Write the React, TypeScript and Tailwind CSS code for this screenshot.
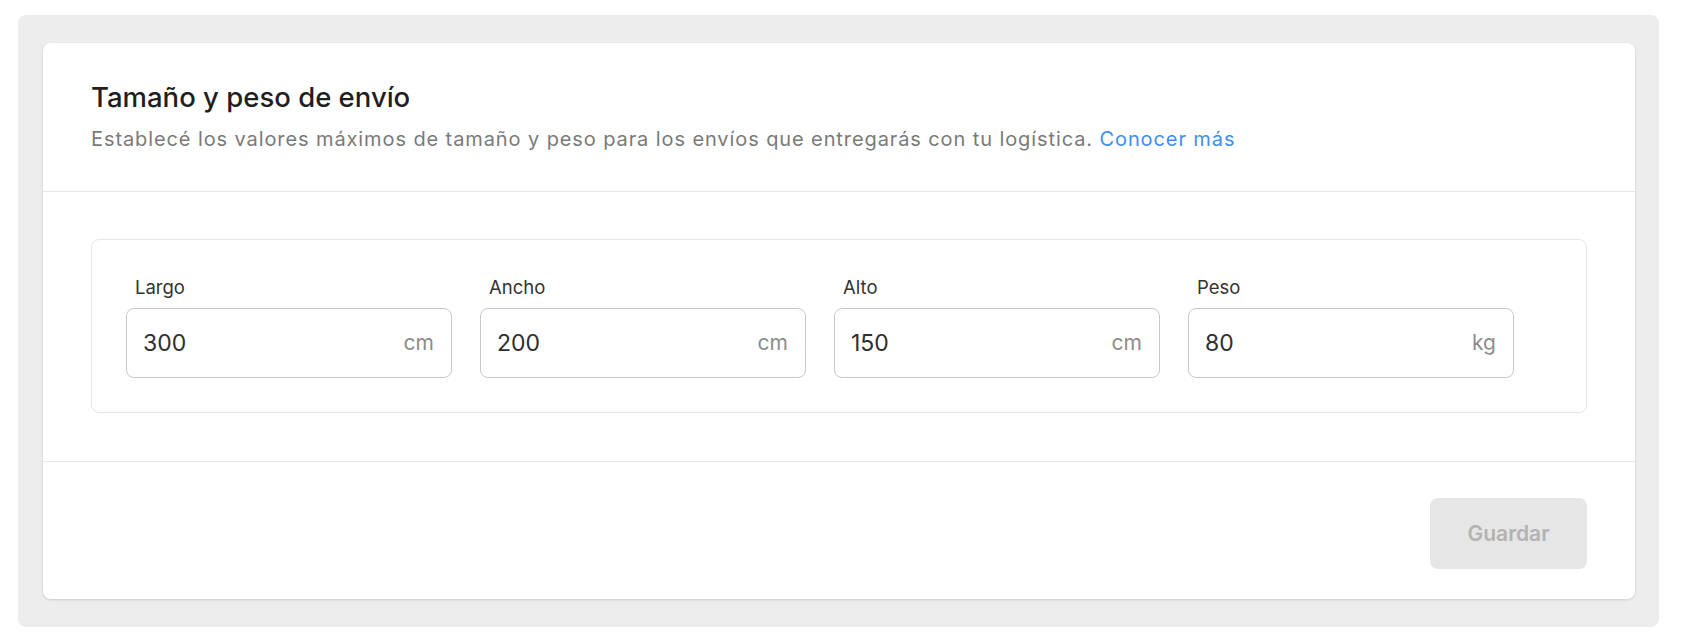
const fields = [
  { label: 'Largo', value: '300', unit: 'cm' },
  { label: 'Ancho', value: '200', unit: 'cm' },
  { label: 'Alto', value: '150', unit: 'cm' },
  { label: 'Peso', value: '80', unit: 'kg' },
];

function MeasureField({ label, value, unit }: { label: string; value: string; unit: string }) {
  return (
    <div className="w-[326px] flex flex-col">
      <label className="pl-[9px] mb-[10px] text-[18.5px] leading-[22px] text-[#333333]">{label}</label>
      <div className="h-[70px] flex items-center justify-between rounded-[8px] border border-[#c9c9c9] bg-white pl-[16px] pr-[17px]">
        <input
          type="text"
          defaultValue={value}
          className="w-[200px] bg-transparent text-[23px] text-[#2e2e2e] outline-none"
        />
        <span className="text-[21px] text-[#8c8c8c]">{unit}</span>
      </div>
    </div>
  );
}

export default function App() {
  return (
    <div
      className="min-h-screen bg-white pl-[18px] pt-[15px]"
      style={{ fontFamily: 'Inter, "Noto Sans", sans-serif' }}
    >
      <div className="w-[1641px] h-[612px] rounded-[8px] bg-[#ededed] pl-[25px] pt-[28px]">
        <div className="w-[1592px] h-[556px] rounded-[8px] bg-white shadow-[0_1px_3px_rgba(0,0,0,0.14)] flex flex-col">
          {/* Header */}
          <div className="h-[149px] px-[48px] pt-[38px] border-b border-[#e6e6e6]">
            <h2 className="text-[27.5px] leading-[32px] font-medium text-[#1f1f1f]">
              Tamaño y peso de envío
            </h2>
            <p className="mt-[14px] text-[20px] leading-[24px] tracking-[0.9px] text-[#7a7a7a]">
              Establecé los valores máximos de tamaño y peso para los envíos que entregarás con tu logística.{' '}
              <a href="#" className="text-[#3d8ef5]">Conocer más</a>
            </p>
          </div>

          {/* Body */}
          <div className="px-[48px] pt-[47px] pb-[48px] border-b border-[#e6e6e6]">
            <div className="rounded-[8px] border border-[#e6e6e6] px-[34px] pt-[36px] pb-[34px] flex gap-[28px]">
              {fields.map((f) => (
                <MeasureField key={f.label} {...f} />
              ))}
            </div>
          </div>

          {/* Footer */}
          <div className="flex-1 flex justify-end px-[48px] pt-[36px]">
            <button
              disabled
              className="w-[157px] h-[71px] rounded-[8px] bg-[#e6e6e6] text-[21px] font-semibold text-[#b3b3b3]"
            >
              Guardar
            </button>
          </div>
        </div>
      </div>
    </div>
  );
}
